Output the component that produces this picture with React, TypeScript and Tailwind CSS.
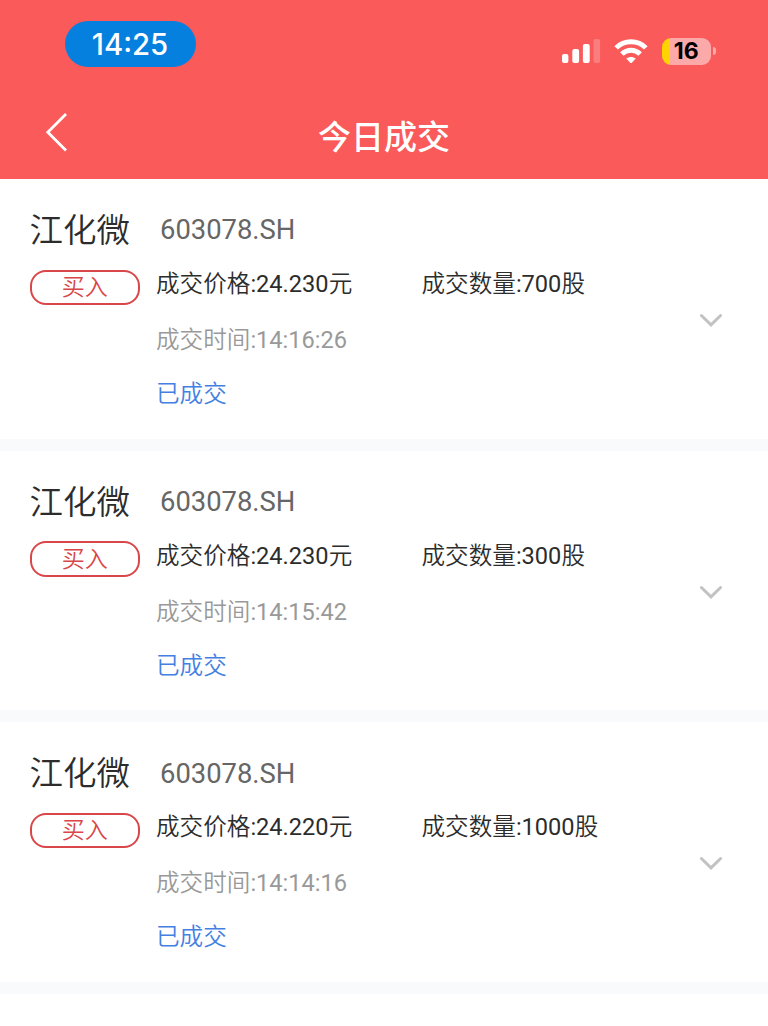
const trades = [
  { price: "24.230", qty: "700", time: "14:16:26" },
  { price: "24.230", qty: "300", time: "14:15:42" },
  { price: "24.220", qty: "1000", time: "14:14:16" },
];

function StatusBar() {
  return (
    <div className="flex h-[88px] items-start justify-between pl-[64.5px] pr-[52.5px]">
      <div className="mt-[21px] flex h-[45.5px] w-[131px] items-center justify-center rounded-full bg-[#0580de] pt-0.5 font-['Inter',sans-serif] text-[29.3px] font-medium leading-none text-white">
        14:25
      </div>
      <div className="mt-[37px] flex h-7 items-center">
        <svg width="40" height="26" viewBox="0 0 40 26" fill="#fff">
          <rect x="1" y="16" width="6.4" height="9" rx="2" />
          <rect x="11.3" y="11" width="6.8" height="14" rx="2" />
          <rect x="21.9" y="6" width="6.8" height="19" rx="2" />
          <rect x="32.5" y="1" width="6.6" height="24" rx="2" opacity=".22" />
        </svg>
        <svg className="ml-3" width="36" height="26" viewBox="0 0 36 26" fill="none" stroke="#fff" strokeWidth="5">
          <path d="M3.2 9.9C11 1.7 25 1.7 32.8 9.9" />
          <path d="M8.8 16c5.4-5.1 13-5.1 18.4 0" />
          <path d="M13.2 20.6c2.8-2.3 6.8-2.3 9.6 0l-4 4.1q-.8.7-1.6 0z" fill="#fff" stroke="none" />
        </svg>
        <div className="ml-[13px] flex h-[27px] w-[49.5px] items-center justify-center rounded-[9px] bg-[linear-gradient(90deg,#ffd400_8px,#fca9a9_8px)] pt-px font-['Inter',sans-serif] text-[23px] font-bold leading-none text-black">
          16
        </div>
        <div className="ml-[1.5px] h-2 w-[3px] rounded-r-full bg-[#fca9a9]" />
      </div>
    </div>
  );
}

function Trade({ price, qty, time }: { price: string; qty: string; time: string }) {
  return (
    <article className="h-[271.7px] border-b-12 border-[#f8fafc] bg-white pl-[29.5px] pr-[45px] pt-[25px]">
      <div className="flex h-[50px] items-center pt-1">
        <h2 className="w-[130.5px] text-[33.5px] font-[350] text-[#2c2c2c]">江化微</h2>
        <span className="text-[27.4px] text-[#666]">603078.SH</span>
      </div>
      <div className="flex">
        <div className="mt-[15.5px] flex h-[35.5px] w-[110.5px] items-center justify-center rounded-[16px] border-2 border-[#d9474a] pt-0.5 text-[23px] font-[350] text-[#d9474a]">
          买入
        </div>
        <div className="ml-4 w-[265.5px] text-[23.6px] font-[350] leading-[34px]">
          <p className="mt-[13px] text-[#2c2c2c]">
            成交价格<span className="font-normal">:{price}</span>元
          </p>
          <p className="mt-[22px] text-[#999]">
            成交时间<span className="font-normal">:{time}</span>
          </p>
          <p className="mt-5 text-[#4380e2]">已成交</p>
        </div>
        <p className="mt-[13px] text-[23.6px] font-[350] leading-[34px] text-[#2c2c2c]">
          成交数量<span className="font-normal">:{qty}</span>股
        </p>
        <svg className="ml-auto mt-[58px]" width="24" height="16" viewBox="0 0 24 16" fill="none" stroke="#c2c2c2" strokeWidth="3" strokeLinecap="round">
          <path d="M2.4 3.5l9.6 9.3 9.6-9.3" />
        </svg>
      </div>
    </article>
  );
}

export default function App() {
  return (
    <main className="h-[1026px] overflow-hidden whitespace-nowrap bg-white font-['Roboto','Noto_Sans_CJK_SC',sans-serif]">
      <header className="h-[179px] bg-[#fa5a5a]">
        <StatusBar />
        <div className="grid h-[91px] grid-cols-[1fr_auto_1fr] items-center">
          <svg className="-mt-[3px] ml-[44px]" width="26" height="40" viewBox="0 0 26 40" fill="none" stroke="#fff" strokeWidth="2.8">
            <path d="M22 2L3.8 20.3 22 38.5" />
          </svg>
          <h1 className="pt-2 text-[33px] font-medium text-white">今日成交</h1>
        </div>
      </header>
      {trades.map((trade) => (
        <Trade key={trade.time} {...trade} />
      ))}
    </main>
  );
}
